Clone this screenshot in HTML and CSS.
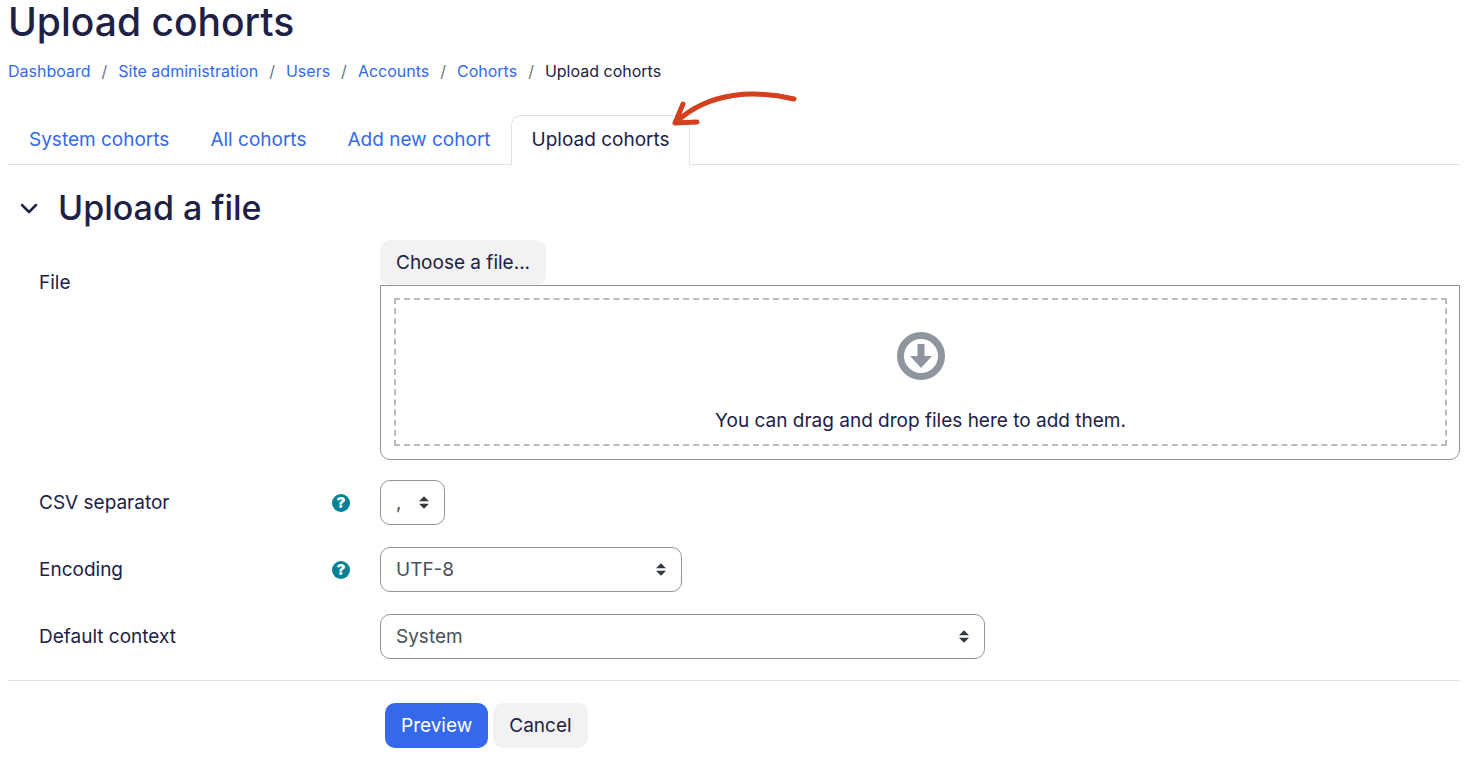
FILE: index.html
```html
<!DOCTYPE html>
<html lang="en">
<head>
    <meta charset="UTF-8">
    <meta name="viewport" content="width=device-width, initial-scale=1.0">
    <title>Upload cohorts</title>
    <link rel="stylesheet" href="styles.css">
</head>
<body>
    <h1>Upload cohorts</h1>
    <nav class="breadcrumb" aria-label="Navigation bar">
        <a href="#">Dashboard</a>
        <span class="divider">/</span>
        <a href="#">Site administration</a>
        <span class="divider">/</span>
        <a href="#">Users</a>
        <span class="divider">/</span>
        <a href="#">Accounts</a>
        <span class="divider">/</span>
        <a href="#">Cohorts</a>
        <span class="divider">/</span>
        <span>Upload cohorts</span>
    </nav>

    <nav class="tabs">
        <a href="#">System cohorts</a>
        <a href="#">All cohorts</a>
        <a href="#">Add new cohort</a>
        <a href="#" class="active">Upload cohorts
            <svg class="arrow" width="126" height="38" viewBox="0 0 126 38" aria-hidden="true">
                <path d="M123 9C84 0 39 1 5 32M12 14L4 33L26 32"/>
            </svg>
        </a>
    </nav>

    <form>
        <div class="section-title">
            <svg width="18" height="12" viewBox="0 0 18 12" aria-hidden="true">
                <path stroke-width="2.5" d="M2 3L9 10L16 3"/>
            </svg>
            <h2>Upload a file</h2>
        </div>

        <div class="form-row file-row">
            <div class="form-label">
                <label for="choose-file">File</label>
            </div>
            <div class="form-field">
                <button type="button" class="btn" id="choose-file">Choose a file...</button>
                <div class="filepicker">
                    <div class="dropzone">
                        <svg width="48" height="48" viewBox="0 0 48 48" aria-hidden="true">
                            <circle cx="24" cy="24" r="20.5"/>
                            <path d="M20.500 12h7v12h7.500L24 36L13 24h7.500z"/>
                        </svg>
                        <div>You can drag and drop files here to add them.</div>
                    </div>
                </div>
            </div>
        </div>

        <div class="form-row">
            <div class="form-label">
                <label for="separator">CSV separator</label>
                <button type="button" class="help" aria-label="Help with CSV separator">?</button>
            </div>
            <div class="form-field">
                <select id="separator" class="small">
                    <option>,</option>
                    <option>;</option>
                    <option>:</option>
                </select>
            </div>
        </div>

        <div class="form-row">
            <div class="form-label">
                <label for="encoding">Encoding</label>
                <button type="button" class="help" aria-label="Help with Encoding">?</button>
            </div>
            <div class="form-field">
                <select id="encoding" class="medium">
                    <option>UTF-8</option>
                </select>
            </div>
        </div>

        <div class="form-row">
            <div class="form-label">
                <label for="context">Default context</label>
            </div>
            <div class="form-field">
                <select id="context" class="large">
                    <option>System</option>
                </select>
            </div>
        </div>

        <div class="form-actions">
            <button type="submit" class="btn primary">Preview</button>
            <button type="button" class="btn">Cancel</button>
        </div>
    </form>
</body>
</html>
```
FILE: styles.css
```css
body {
    margin: 0;
    padding: 0 6px 0 8px;
    font-family: Inter, "Liberation Sans", sans-serif;
    font-size: 19px;
    line-height: 29px;
    color: #1d2145;
    background-color: #fff;
}
h1, h2 {
    margin: 0;
    font-weight: 500;
}
h1 {
    font-size: 39px;
    line-height: 44px;
}
h2 {
    font-size: 34px;
    line-height: 42px;
}
a {
    color: #3369ea;
    text-decoration: none;
}
.breadcrumb {
    display: flex;
    gap: 11px;
    margin-top: 15px;
    font-size: 16px;
    line-height: 24px;
}
.breadcrumb .divider {
    color: #6a737b;
}
.tabs {
    display: flex;
    margin-top: 32px;
    border-bottom: 1px solid #dee2e6;
}
.tabs a {
    padding: 9px 19px 10px 20px;
    margin-bottom: -1px;
    border: 1px solid transparent;
    border-radius: 10px 10px 0 0;
}
.tabs .active {
    position: relative;
    color: #1d2145;
    background-color: #fff;
    border-color: #dee2e6 #dee2e6 #fff;
}
.arrow {
    position: absolute;
    top: -26px;
    right: -108px;
    fill: none;
    stroke: #d43f1e;
    stroke-width: 5;
    stroke-linecap: round;
    stroke-linejoin: round;
}
.section-title {
    display: flex;
    align-items: center;
    gap: 20px;
    padding-left: 12px;
    margin-top: 22px;
}
.section-title svg {
    fill: none;
    stroke: #1d2145;
    stroke-linecap: round;
    stroke-linejoin: round;
}
.form-row {
    display: grid;
    grid-template-columns: 311px 1fr;
    column-gap: 30px;
    align-items: center;
    padding-left: 31px;
    margin-top: 22px;
}
.file-row {
    align-items: start;
    margin-top: 11px;
}
.file-row + .form-row {
    margin-top: 20px;
}
.file-row .form-label {
    padding-top: 28px;
}
.form-label {
    display: flex;
    align-items: center;
    justify-content: space-between;
}
.form-field {
    display: flex;
    flex-direction: column;
    align-items: flex-start;
}
.btn {
    padding: 8px 16px;
    border: none;
    border-radius: 10px;
    font: inherit;
    color: #1d2145;
    background-color: #f2f2f2;
    cursor: pointer;
}
.primary {
    color: #fff;
    background-color: #3369ea;
}
.filepicker {
    box-sizing: border-box;
    width: 100%;
    padding: 12px 12px 13px 13px;
    border: 1px solid #8f959e;
    border-radius: 0 0 10px 10px;
}
.dropzone {
    display: flex;
    flex-direction: column;
    align-items: center;
    gap: 26px;
    padding: 32px 0 9px;
    border: 2px dashed #bbb;
}
.dropzone svg {
    fill: #8f959e;
}
.dropzone circle {
    fill: none;
    stroke: #8f959e;
    stroke-width: 7;
}
.help {
    width: 18px;
    height: 18px;
    padding: 0;
    border: none;
    border-radius: 50%;
    font: 900 15px/18px Inter, sans-serif;
    color: #fff;
    background-color: #008196;
    cursor: pointer;
}
select {
    appearance: none;
    height: 45px;
    padding: 0 36px 0 15px;
    border: 1px solid #8f959e;
    border-radius: 10px;
    font: inherit;
    color: #495057;
    background: #fff url("data:image/svg+xml,%3csvg xmlns='http://www.w3.org/2000/svg' viewBox='0 0 4 5'%3e%3cpath fill='%23343a40' d='M2 0L0 2h4zm0 5L0 3h4z'/%3e%3c/svg%3e") no-repeat right 15px center / 10px 13px;
}
.small {
    width: 6%;
}
.medium {
    width: 28%;
}
.large {
    width: 56%;
}
.form-actions {
    display: flex;
    gap: 5px;
    padding: 22px 0 9px 377px;
    margin-top: 21px;
    border-top: 1px solid #dee2e6;
}
```
